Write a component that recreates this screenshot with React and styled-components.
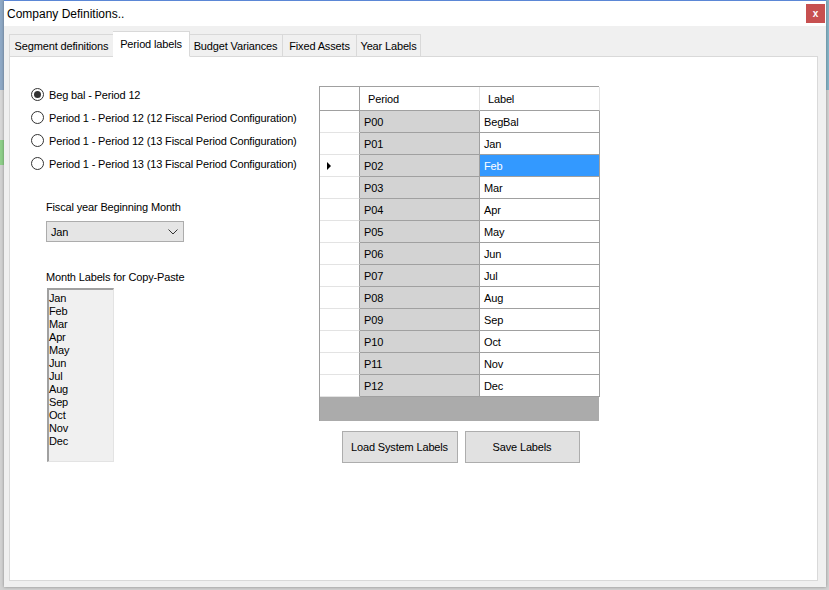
import styled, { createGlobalStyle } from "styled-components";

const GlobalStyle = createGlobalStyle`
  html, body {
    margin: 0;
    padding: 0;
    width: 829px;
    height: 590px;
    overflow: hidden;
  }
  body {
    background:
      linear-gradient(
          to bottom,
          #8fa9c6 0,
          #8fa9c6 90px,
          #d8d8d8 90px,
          #d8d8d8 140px,
          #8fd08a 140px,
          #8fd08a 165px,
          #d2d2d2 165px
        )
        left top / 4px 100% no-repeat,
      linear-gradient(to bottom, #86b4c7 0, #86b4c7 90px, #d2d2d2 90px);
    font-family: "Liberation Sans", Arial, sans-serif;
    font-size: 11px;
    letter-spacing: -0.15px;
    color: #000;
  }
`;

const Window = styled.div`
  position: relative;
  margin-left: 4px;
  width: 822px;
  height: 587px;
  background: #f0f0f0;
  border-top: 1px solid #5b87d6;
  box-sizing: border-box;
  box-shadow: 0 0 3px rgba(0, 0, 0, 0.35);
  display: flex;
  flex-direction: column;
`;

const TitleBar = styled.div`
  height: 25px;
  background: #fff;
  display: flex;
  align-items: center;
  justify-content: space-between;
  padding: 0 1px 0 3px;
  font-size: 12px;
  letter-spacing: 0;
`;

const CloseButton = styled.div`
  width: 19px;
  height: 19px;
  background: #c75050;
  color: #fff;
  font-weight: bold;
  font-size: 10px;
  display: flex;
  align-items: center;
  justify-content: center;
  margin-top: 3px;
  align-self: flex-start;
`;

const Body = styled.div`
  flex: 1;
  display: flex;
  flex-direction: column;
  padding: 6px 8px 6px 5px;
  min-height: 0;
`;

const TabStrip = styled.div`
  display: flex;
  align-items: flex-end;
  height: 25px;
  position: relative;
  z-index: 1;
  margin-bottom: -1px;
`;

const Tab = styled.div`
  width: ${(p) => p.$w}px;
  height: ${(p) => (p.$active ? "26px" : "23px")};
  margin: 0 ${(p) => (p.$active ? "-1px" : "0")};
  background: ${(p) => (p.$active ? "#fff" : "#f0f0f0")};
  border: 1px solid #d9d9d9;
  border-bottom: ${(p) => (p.$active ? "1px solid #fff" : "1px solid #d9d9d9")};
  box-sizing: border-box;
  display: flex;
  align-items: center;
  justify-content: center;
  padding-top: ${(p) => (p.$active ? "0" : "1px")};
  position: relative;
  z-index: ${(p) => (p.$active ? 2 : 1)};
  white-space: nowrap;
  & + & {
    border-left: ${(p) => (p.$active ? "1px solid #d9d9d9" : "none")};
  }
`;

const Panel = styled.div`
  flex: 1;
  background: #fff;
  border: 1px solid #d9d9d9;
  display: flex;
  padding-left: 21px;
`;

const LeftCol = styled.div`
  width: 288px;
  padding-top: 26px;
  display: flex;
  flex-direction: column;
`;

const RadioRow = styled.label`
  height: 23px;
  display: flex;
  align-items: center;
  gap: 5px;
`;

const RadioCircle = styled.span`
  width: 13px;
  height: 13px;
  border-radius: 50%;
  border: 1px solid #333;
  box-sizing: border-box;
  display: flex;
  align-items: center;
  justify-content: center;
  background: #fff;
  &::after {
    content: "";
    width: 7px;
    height: 7px;
    border-radius: 50%;
    background: ${(p) => (p.$checked ? "#333" : "transparent")};
  }
`;

const Field = styled.div`
  margin-left: 15px;
  display: flex;
  flex-direction: column;
  align-items: flex-start;
  margin-top: ${(p) => p.$top}px;
`;

const FieldLabel = styled.div`
  height: 13px;
  line-height: 13px;
  margin-bottom: ${(p) => p.$gap}px;
`;

const Select = styled.div`
  width: 138px;
  height: 21px;
  box-sizing: border-box;
  background: #e5e5e5;
  border: 1px solid #acacac;
  display: flex;
  align-items: center;
  justify-content: space-between;
  padding: 0 5px 0 4px;
`;

const ListBox = styled.div`
  margin-left: 1px;
  width: 67px;
  height: 174px;
  box-sizing: border-box;
  background: #f0f0f0;
  border-top: 2px solid #a0a0a0;
  border-left: 2px solid #a0a0a0;
  border-right: 1px solid #e3e3e3;
  border-bottom: 1px solid #e3e3e3;
  padding: 2px 0 0 0;
  letter-spacing: -0.2px;
`;

const ListItem = styled.div`
  height: 13px;
  line-height: 13px;
`;

const RightCol = styled.div`
  padding-top: 29px;
  display: flex;
  flex-direction: column;
`;

const Grid = styled.div`
  width: 280px;
  display: grid;
  grid-template-columns: 40px 120px 120px;
  border-top: 1px solid #a0a0a0;
  border-left: 1px solid #a0a0a0;
  background: #ababab;
  padding-bottom: 24px;
  box-sizing: border-box;
`;

const HeadCell = styled.div`
  height: 23px;
  background: #fff;
  display: flex;
  align-items: center;
  padding-left: 8px;
  border-bottom: 1px solid #a0a0a0;
  border-right: 1px solid ${(p) => (p.$corner ? "#a0a0a0" : "#e3e3e3")};
`;

const RowHead = styled.div`
  height: 21px;
  background: #fff;
  border-right: 1px solid #a0a0a0;
  border-bottom: 1px solid #e3e3e3;
  display: flex;
  align-items: center;
  padding-left: 7px;
`;

const Cell = styled.div`
  height: 21px;
  display: flex;
  align-items: center;
  padding-left: 4px;
  background: ${(p) => (p.$selected ? "#3399ff" : p.$readonly ? "#d3d3d3" : "#fff")};
  color: ${(p) => (p.$selected ? "#fff" : "#000")};
  border-right: 1px solid #a0a0a0;
  border-bottom: 1px solid #a0a0a0;
`;

const Pointer = styled.span`
  width: 0;
  height: 0;
  border-top: 4px solid transparent;
  border-bottom: 4px solid transparent;
  border-left: 4px solid #000;
`;

const ButtonRow = styled.div`
  display: flex;
  justify-content: center;
  gap: 7px;
  margin-top: 10px;
  padding-left: 3px;
`;

const Button = styled.button`
  width: ${(p) => p.$w}px;
  height: 32px;
  background: #e1e1e1;
  border: 1px solid #adadad;
  font-family: inherit;
  font-size: 11px;
  letter-spacing: -0.15px;
  color: #000;
  padding: 0;
`;

const radios = [
  "Beg bal - Period 12",
  "Period 1 - Period 12 (12 Fiscal Period Configuration)",
  "Period 1 - Period 12 (13 Fiscal Period Configuration)",
  "Period 1 - Period 13 (13 Fiscal Period Configuration)",
];

const months = ["Jan", "Feb", "Mar", "Apr", "May", "Jun", "Jul", "Aug", "Sep", "Oct", "Nov", "Dec"];
const labels = ["BegBal", ...months];
const tabs = [
  { name: "Segment definitions", w: 105 },
  { name: "Period labels", w: 77 },
  { name: "Budget Variances", w: 94 },
  { name: "Fixed Assets", w: 74 },
  { name: "Year Labels", w: 64 },
];

const Chevron = () => (
  <svg width="10" height="6" viewBox="0 0 10 6">
    <path d="M0.5 0.5 L5 5 L9.5 0.5" fill="none" stroke="#333" strokeWidth="1" />
  </svg>
);

const App = () => {
  return (
    <>
      <GlobalStyle />
      <Window>
        <TitleBar>
          <span>Company Definitions..</span>
          <CloseButton>x</CloseButton>
        </TitleBar>
        <Body>
          <TabStrip>
            {tabs.map((t) => (
              <Tab key={t.name} $w={t.w} $active={t.name === "Period labels"}>
                {t.name}
              </Tab>
            ))}
          </TabStrip>
          <Panel>
            <LeftCol>
              {radios.map((r, i) => (
                <RadioRow key={r}>
                  <RadioCircle $checked={i === 0} />
                  {r}
                </RadioRow>
              ))}
              <Field $top={26}>
                <FieldLabel $gap={7}>Fiscal year Beginning Month</FieldLabel>
                <Select>
                  <span>Jan</span>
                  <Chevron />
                </Select>
              </Field>
              <Field $top={29}>
                <FieldLabel $gap={4}>Month Labels for Copy-Paste</FieldLabel>
                <ListBox>
                  {months.map((m) => (
                    <ListItem key={m}>{m}</ListItem>
                  ))}
                </ListBox>
              </Field>
            </LeftCol>
            <RightCol>
              <Grid>
                <HeadCell $corner />
                <HeadCell>Period</HeadCell>
                <HeadCell>Label</HeadCell>
                {labels.map((l, i) => {
                  const p = "P" + String(i).padStart(2, "0");
                  return [
                    <RowHead key={p + "h"}>{i === 2 && <Pointer />}</RowHead>,
                    <Cell key={p} $readonly>
                      {p}
                    </Cell>,
                    <Cell key={p + "l"} $selected={i === 2}>
                      {l}
                    </Cell>,
                  ];
                })}
              </Grid>
              <ButtonRow>
                <Button $w={116}>Load System Labels</Button>
                <Button $w={115}>Save Labels</Button>
              </ButtonRow>
            </RightCol>
          </Panel>
        </Body>
      </Window>
    </>
  );
};

export default App;
